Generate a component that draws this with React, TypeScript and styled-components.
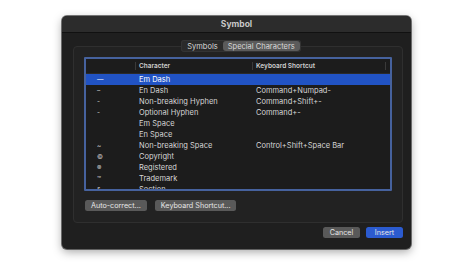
import styled, { createGlobalStyle } from "styled-components";

const Global = createGlobalStyle`
  body {
    margin: 0;
    background: #ffffff;
    font-family: "Inter", "Liberation Sans", sans-serif;
  }
`;

const Page = styled.div`
  width: 474px;
  height: 266px;
  padding: 16px 0 0 62px;
  box-sizing: border-box;
`;

const Window = styled.div`
  width: 349px;
  height: 233px;
  background: #1f1f1f;
  border-radius: 5px;
  box-shadow: 0 3px 10px rgba(0, 0, 0, 0.35), 0 0 0 1px rgba(0, 0, 0, 0.5);
  overflow: hidden;
  display: flex;
  flex-direction: column;
`;

const TitleBar = styled.div`
  height: 16px;
  background: #2c2c2c;
  border-bottom: 1px solid #111;
  color: #c9c9c9;
  font-size: 8.5px;
  font-weight: 700;
  display: flex;
  align-items: center;
  justify-content: center;
`;

const Body = styled.div`
  flex: 1;
  display: flex;
  flex-direction: column;
  padding: 0 8px 11px 11px;
`;

const TabRow = styled.div`
  display: flex;
  justify-content: center;
  margin-top: 7px;
  margin-left: 6px;
  position: relative;
  z-index: 1;
`;

const Segments = styled.div`
  display: flex;
  background: #2a2a2a;
  border-radius: 3px;
  padding: 1px;
  box-shadow: inset 0 0 0 1px #333;
`;

const Segment = styled.div<{ $active?: boolean }>`
  height: 10px;
  padding: 0 5px;
  border-radius: 3px;
  font-size: 7.5px;
  color: #d8d8d8;
  display: flex;
  align-items: center;
  background: ${(p) => (p.$active ? "#5b5b5b" : "transparent")};
`;

const Group = styled.div`
  margin-top: -6px;
  height: 177px;
  box-sizing: border-box;
  border: 1px solid #2f2f2f;
  background: #222222;
  border-radius: 4px;
  padding: 10px 10px 0 10px;
  display: flex;
  flex-direction: column;
`;

const Table = styled.div`
  height: 134px;
  box-sizing: border-box;
  border: 2px solid #46629e;
  border-radius: 1px;
  background: #1c1c1c;
  overflow: hidden;
`;

const HeaderRow = styled.div`
  display: grid;
  grid-template-columns: 49px 117px 133px 1fr;
  height: 14px;
  border-bottom: 1px solid #2a2a2a;
  font-size: 6.5px;
  font-weight: 600;
  color: #d0d0d0;
`;

const HeadCell = styled.div<{ $sep?: boolean }>`
  display: flex;
  align-items: center;
  padding-left: 3px;
  border-left: ${(p) => (p.$sep ? "1px solid #3a3a3a" : "none")};
  margin: 3px 0;
`;

const Row = styled.div<{ $selected?: boolean }>`
  display: grid;
  grid-template-columns: 49px 117px 133px 1fr;
  height: 11px;
  font-size: 7.5px;
  color: ${(p) => (p.$selected ? "#ffffff" : "#d6d6d6")};
  background: ${(p) => (p.$selected ? "#2153c4" : "transparent")};
`;

const Cell = styled.div`
  display: flex;
  align-items: center;
  padding-left: 4px;
  white-space: nowrap;
`;

const Glyph = styled(Cell)`
  padding-left: 11px;
  font-size: 6.5px;
`;

const ButtonRow = styled.div`
  display: flex;
  gap: 8px;
  margin-top: 9px;
  padding-left: 1px;
`;

const Button = styled.div<{ $primary?: boolean }>`
  height: 11px;
  min-width: 25px;
  padding: 0 6px;
  border-radius: 2.5px;
  font-size: 7.2px;
  display: flex;
  align-items: center;
  justify-content: center;
  color: #e6e6e6;
  background: ${(p) => (p.$primary ? "#2b5bd0" : "#595959")};
`;

const Footer = styled.div`
  display: flex;
  justify-content: flex-end;
  gap: 6px;
  margin-top: auto;
  padding-right: 0px;
`;

const rows: [string, string, string][] = [
  ["—", "Em Dash", ""],
  ["–", "En Dash", "Command+Numpad-"],
  ["-", "Non-breaking Hyphen", "Command+Shift+-"],
  ["-", "Optional Hyphen", "Command+-"],
  ["", "Em Space", ""],
  ["", "En Space", ""],
  ["~", "Non-breaking Space", "Control+Shift+Space Bar"],
  ["©", "Copyright", ""],
  ["®", "Registered", ""],
  ["™", "Trademark", ""],
  ["§", "Section", ""],
];

export default function App() {
  return (
    <Page>
      <Global />
      <Window>
        <TitleBar>Symbol</TitleBar>
        <Body>
          <TabRow>
            <Segments>
              <Segment>Symbols</Segment>
              <Segment $active>Special Characters</Segment>
            </Segments>
          </TabRow>
          <Group>
            <Table>
              <HeaderRow>
                <HeadCell />
                <HeadCell $sep>Character</HeadCell>
                <HeadCell $sep>Keyboard Shortcut</HeadCell>
                <HeadCell $sep />
              </HeaderRow>
              {rows.map(([g, name, key], i) => (
                <Row key={name} $selected={i === 0}>
                  <Glyph>{g}</Glyph>
                  <Cell>{name}</Cell>
                  <Cell>{key}</Cell>
                  <Cell />
                </Row>
              ))}
            </Table>
            <ButtonRow>
              <Button>Auto-correct...</Button>
              <Button>Keyboard Shortcut...</Button>
            </ButtonRow>
          </Group>
          <Footer>
            <Button>Cancel</Button>
            <Button $primary>Insert</Button>
          </Footer>
        </Body>
      </Window>
    </Page>
  );
}
